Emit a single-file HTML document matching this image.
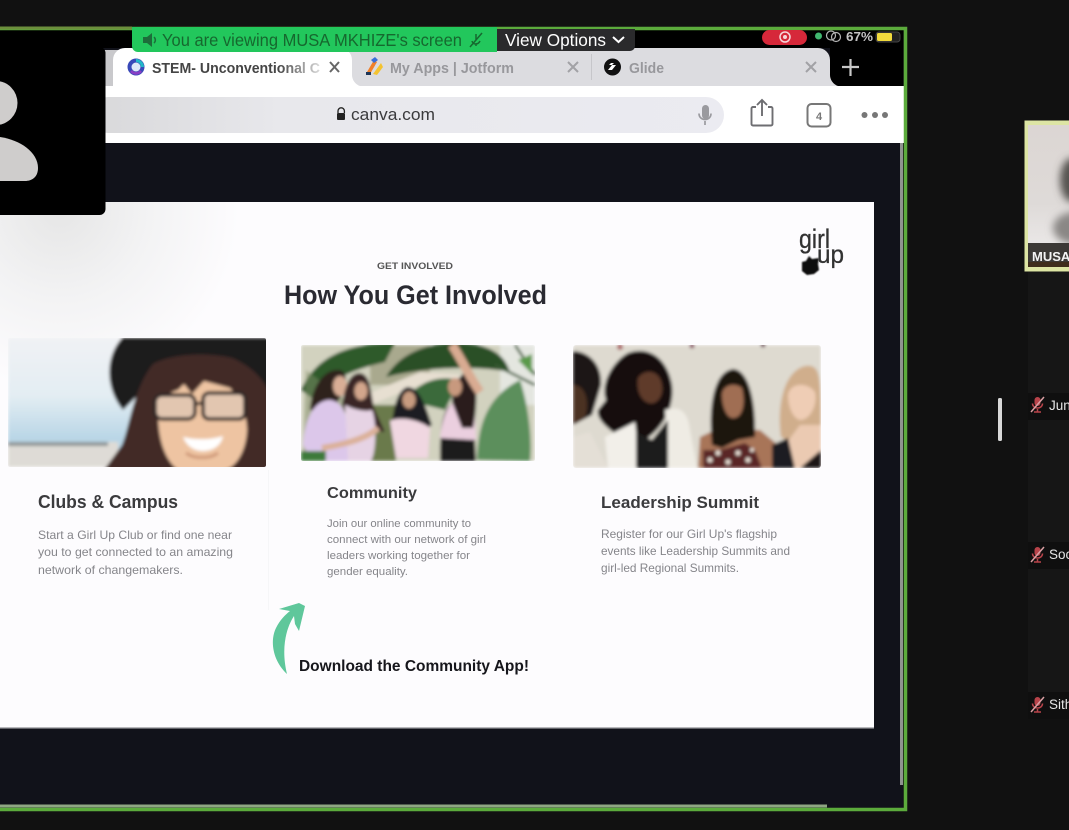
<!DOCTYPE html>
<html lang="en">
<head>
<meta charset="utf-8">
<title>Zoom screen share</title>
<style>
html,body{margin:0;padding:0;background:#111;width:1069px;height:830px;overflow:hidden}
svg{display:block}
text{font-family:"Liberation Sans",sans-serif}
</style>
</head>
<body>
<svg xmlns="http://www.w3.org/2000/svg" width="1069" height="830" viewBox="0 0 1069 830">
<defs>
<filter id="b1" x="-5%" y="-5%" width="110%" height="110%"><feGaussianBlur stdDeviation="1.500"/></filter>
<filter id="b3" x="-50%" y="-50%" width="200%" height="200%"><feGaussianBlur stdDeviation="4"/></filter>
<filter id="bt" x="-2%" y="-20%" width="104%" height="140%"><feGaussianBlur stdDeviation="0.35"/></filter>
<filter id="bt2" x="-20%" y="-20%" width="140%" height="140%"><feGaussianBlur stdDeviation="0.8"/></filter>
<linearGradient id="sky" x1="0" y1="0" x2="0" y2="1"><stop offset="0" stop-color="#f0f2f4"/><stop offset=".45" stop-color="#e3edf3"/><stop offset=".78" stop-color="#b9d6e6"/><stop offset="1" stop-color="#c0d8e6"/></linearGradient>
<linearGradient id="addr" x1="0" y1="0" x2="1" y2="0"><stop offset="0" stop-color="#d8d8da"/><stop offset=".3" stop-color="#e8e8ec"/><stop offset="1" stop-color="#ebebf1"/></linearGradient>
<linearGradient id="fade" x1="0" y1="0" x2="1" y2="0"><stop offset="0" stop-color="#444"/><stop offset=".75" stop-color="#444"/><stop offset="1" stop-color="#ddd"/></linearGradient>
<radialGradient id="mist" gradientUnits="userSpaceOnUse" cx="60" cy="210" r="180"><stop offset="0" stop-color="#e6e6e6"/><stop offset=".5" stop-color="#f3f3f4"/><stop offset="1" stop-color="#fdfcfe"/></radialGradient>
<linearGradient id="musa" x1="0" y1="0" x2="0" y2="1"><stop offset="0" stop-color="#dcd6d3"/><stop offset=".55" stop-color="#dedad8"/><stop offset="1" stop-color="#f0eeee"/></linearGradient>
<clipPath id="p1"><rect x="8" y="338" width="258" height="129" rx="2"/></clipPath>
<clipPath id="p2"><rect x="301" y="345" width="234" height="116" rx="2"/></clipPath>
<clipPath id="p3"><rect x="573" y="345" width="248" height="123" rx="3"/></clipPath>
<g id="mutemic" fill="none">
  <rect x="3.500" y="0" width="6" height="9" rx="3" fill="#b8434a"/>
  <path d="M1.500 6.500c0 6 10 6 10 0M6.500 12v2.500M3 15h7" stroke="#b8434a" stroke-width="1.500"/>
  <path d="M0 15L13 0" stroke="#d9a0a4" stroke-width="1.500"/>
</g>
</defs>

<rect width="1069" height="830" fill="#111"/>

<!-- main share frame -->
<rect x="0" y="30" width="903" height="778" fill="#11121a"/>
<rect x="0" y="30" width="903" height="18" fill="#000"/>
<rect x="830" y="30" width="73" height="56" fill="#000"/>

<!-- tabs -->
<rect x="100" y="50" width="30" height="36" fill="#c9c9cc"/>
<path d="M335 86V48H818a12 12 0 0 1 12 12v14a12 12 0 0 0 8 12z" fill="#dcdce0"/>
<path d="M113 86V60a12 12 0 0 1 12-12H340a12 12 0 0 1 12 12v14a12 12 0 0 0 8 12z" fill="#fff"/>
<rect x="0" y="86" width="904" height="57" fill="#fff"/>
<rect x="591" y="54" width="1" height="26" fill="#c6c6ca"/>

<circle cx="136" cy="67" r="8.500" fill="#3848b8"/>
<path d="M136 59a8 8 0 0 1 8 8h-3a5 5 0 0 0-5-5z" fill="#22b8c8"/>
<path d="M130 72a8 8 0 0 0 12 0l-2-2a5 5 0 0 1-8 0z" fill="#8a3fc4"/>
<circle cx="136" cy="67" r="4.500" fill="#dfe8f8"/>
<text x="152" y="73" font-size="14.500" font-weight="700" fill="url(#fade)" textLength="168" lengthAdjust="spacingAndGlyphs" filter="url(#bt)">STEM- Unconventional C</text>
<path d="M330 62l9 10M339 62l-9 10" stroke="#666" stroke-width="2"/>

<path d="M367 72l7-12 3 2-7 12z" fill="#f0802a"/>
<path d="M373 74l8-11 2 4-6 8z" fill="#f4c330"/>
<path d="M371 60l4-3 3 3-4 3z" fill="#3a6fd8"/>
<rect x="366" y="72" width="5" height="3" fill="#1d3557"/>
<text x="390" y="73" font-size="14.500" font-weight="700" fill="#98989c" textLength="124" lengthAdjust="spacingAndGlyphs" filter="url(#bt)">My Apps | Jotform</text>
<path d="M568 62l10 10M578 62l-10 10" stroke="#a2a2a6" stroke-width="2"/>

<circle cx="612.500" cy="67" r="8.500" fill="#111"/>
<path d="M608 70l4-5h4l-4 5zM609 65l2-2h3l-2 2z" fill="#fff"/>
<text x="629" y="73" font-size="14.500" font-weight="700" fill="#98989c" textLength="35" lengthAdjust="spacingAndGlyphs" filter="url(#bt)">Glide</text>
<path d="M806 62l10 10M816 62l-10 10" stroke="#a2a2a6" stroke-width="2"/>
<path d="M842 67h17M850.500 59v17" stroke="#c8c8c8" stroke-width="2.200"/>

<!-- address bar -->
<rect x="90" y="97" width="634" height="36" rx="18" fill="url(#addr)"/>
<path d="M338 113v-2a3.200 3.200 0 0 1 6.400 0v2" fill="none" stroke="#222" stroke-width="1.300"/>
<rect x="337" y="113" width="8" height="7" rx="1" fill="#222"/>
<text x="351" y="120" font-size="17" fill="#3a3a3c" textLength="84" lengthAdjust="spacingAndGlyphs" filter="url(#bt)">canva.com</text>
<rect x="702" y="105" width="7" height="14" rx="3.500" fill="#9a9a9f"/>
<path d="M699 113.500c0 8 12 8 12 0M705 121v4" stroke="#9a9a9f" stroke-width="1.700" fill="none"/>
<path d="M756 107h-3a1.500 1.500 0 0 0-1.500 1.500V124a1.500 1.500 0 0 0 1.500 1.500h18a1.500 1.500 0 0 0 1.500-1.500V108.500a1.500 1.500 0 0 0-1.500-1.500h-3M762 116V101M757 105l5-5 5 5" fill="none" stroke="#6e6e72" stroke-width="1.900"/>
<rect x="807.500" y="104" width="23" height="22.500" rx="4" fill="none" stroke="#777" stroke-width="2"/>
<text x="819" y="120" font-size="11" font-weight="700" text-anchor="middle" fill="#777">4</text>
<circle cx="864.500" cy="115" r="3" fill="#777"/><circle cx="875" cy="115" r="3" fill="#777"/><circle cx="885" cy="115" r="3" fill="#777"/>

<!-- slide -->
<rect x="0" y="202" width="874" height="526" fill="#fdfcfe"/>
<rect x="0" y="202" width="260" height="200" fill="url(#mist)"/>
<rect x="0" y="727" width="874" height="1.500" fill="#b8b8bc"/>
<rect x="268" y="470" width="1" height="140" fill="#f6f6f8"/>

<text x="377" y="269" font-size="9" font-weight="700" fill="#555" textLength="76" lengthAdjust="spacingAndGlyphs" filter="url(#bt)">GET INVOLVED</text>
<text x="284" y="304" font-size="27" font-weight="700" fill="#2b2b30" textLength="263" lengthAdjust="spacingAndGlyphs" filter="url(#bt)">How You Get Involved</text>

<!-- logo -->
<path d="M802 262l4-1 3-5 3 3 7-1-1 6 1 6-5 4-7 1-5-4z" fill="#111" filter="url(#bt2)"/>
<g filter="url(#bt)" stroke="#333" stroke-width=".3">
<text x="799" y="248" font-size="27" fill="#333" textLength="31" lengthAdjust="spacingAndGlyphs">girl</text>
<text x="817" y="263" font-size="25" fill="#333" textLength="27" lengthAdjust="spacingAndGlyphs">up</text>
</g>

<!-- photo 1 -->
<g clip-path="url(#p1)">
<g filter="url(#b1)">
<rect x="8" y="338" width="258" height="129" fill="url(#sky)"/>
<rect x="8" y="442" width="110" height="25" fill="#dedbd6"/>
<rect x="8" y="442" width="100" height="4" fill="#8f9596"/>
<path d="M122 338H270V420L240 372 165 368 123 410C106 390 104 358 122 338z" fill="#1d1a1e"/>
<path d="M153 364C133 390 130 425 122 445L104 470H270V395C264 378 250 366 232 358 205 352 172 354 153 364z" fill="#422a28"/>
<path d="M158 412C160 398 170 392 178 390L184 384 192 394 204 381 230 388C240 398 247 415 247 430 246 452 235 470 222 470H178C165 460 158 440 158 412z" fill="#eec4a2"/>
<rect x="155" y="395" width="40" height="24" rx="7" fill="#e2c6b0" stroke="#2f2725" stroke-width="3.500"/>
<rect x="203" y="393" width="42" height="26" rx="6" fill="#e2c6b0" stroke="#2f2725" stroke-width="3.500"/>
<path d="M195 404l8-1" stroke="#2f2725" stroke-width="3"/>
<path d="M183 437c12 3 28 3 40-1-2 11-12 15-20 15s-16-4-20-14z" fill="#fff"/>
<path d="M186 453c8 6 24 6 32 0" fill="none" stroke="#cf9878" stroke-width="3"/>
</g>
</g>

<!-- photo 2 -->
<g clip-path="url(#p2)">
<g filter="url(#b1)">
<rect x="301" y="345" width="234" height="116" fill="#d2d2bf"/>
<rect x="370" y="345" width="60" height="40" fill="#a9a98e"/>
<rect x="500" y="345" width="35" height="60" fill="#e4e6e0"/>
<path d="M301 390C315 358 345 343 395 343L385 362C360 368 330 378 312 398z" fill="#2f5a2a"/>
<path d="M386 377C400 352 430 343 455 343 490 343 505 355 510 372 480 366 430 366 386 377z" fill="#2a4f27"/>
<path d="M365 395L420 372 470 375 480 390 420 385 370 405z" fill="#e7dfd1"/>
<path d="M405 400C420 380 440 375 460 380L445 410z" fill="#3a6a3a"/>
<rect x="366" y="405" width="30" height="56" fill="#6b7a4c"/>
<path d="M306 370L303 461 345 461 345 400z" fill="#7f8c66" opacity=".5"/>
<path d="M310 410C312 385 325 368 340 370 350 373 346 392 337 402L332 412z" fill="#2f211f"/>
<path d="M303 445C305 415 316 400 330 400 345 402 350 420 350 461H312z" fill="#dcc7ea"/>
<ellipse cx="340" cy="386" rx="7" ry="10" fill="#d9ae96"/>
<path d="M342 405C345 385 350 373 360 373 372 375 370 395 375 410L385 432 365 430 345 412z" fill="#3a2826"/>
<ellipse cx="361" cy="391" rx="6.500" ry="9" fill="#d3a68c"/>
<path d="M345 405C355 410 365 412 372 410 378 425 375 461 370 461H348z" fill="#e6d3e4"/>
<path d="M322 448C340 445 365 440 378 428" fill="none" stroke="#dbb19a" stroke-width="6"/>
<path d="M392 430C392 410 398 388 408 387 420 388 425 405 432 425L420 432z" fill="#1f1a20"/>
<ellipse cx="409" cy="400" rx="6.500" ry="8.500" fill="#c79b80"/>
<path d="M390 421C400 416 420 420 430 428L428 458H396z" fill="#f0d7e1"/>
<path d="M440 461C440 430 442 412 450 405L473 408 476 461z" fill="#1a1a1e"/>
<path d="M440 438C443 415 448 405 455 402L475 408 476 440z" fill="#ebcfdf"/>
<path d="M452 402C452 385 462 369 472 372 478 385 477 410 473 428H462z" fill="#2a1e1e"/>
<ellipse cx="455" cy="387" rx="7" ry="9" fill="#c8997e"/>
<path d="M452 345C462 360 470 378 480 392" fill="none" stroke="#d9ab92" stroke-width="9"/>
<path d="M477 460C478 420 490 395 520 380 530 410 532 445 530 461z" fill="#5b8f5c"/>
<path d="M515 345L535 375M495 365L535 385" stroke="#3a5a34" stroke-width="2.500"/>
<path d="M518 360l14 14v-20z" fill="#5a9a4a"/>
<rect x="301" y="451" width="25" height="10" fill="#3e7a3a"/>
</g>
</g>

<!-- photo 3 -->
<g clip-path="url(#p3)">
<g filter="url(#b1)">
<rect x="573" y="345" width="248" height="123" fill="#dedad0"/>
<circle cx="620" cy="347" r="3" fill="#a66"/><circle cx="692" cy="346" r="2.500" fill="#85485e"/><circle cx="763" cy="345" r="2.500" fill="#6e4858"/>
<path d="M573 351C590 352 602 365 601 385L592 415 573 425z" fill="#1e1714"/>
<path d="M573 385C585 385 590 400 585 418L573 425z" fill="#4c3022"/>
<path d="M573 437L590 432 608 468H573z" fill="#e4dfd6"/>
<path d="M606 400C600 385 612 362 628 353 650 345 668 360 672 385 675 410 660 430 645 440L620 437C610 430 596 420 598 410z" fill="#17100e"/>
<path d="M638 378C645 368 660 370 662 385 664 398 655 405 649 403 641 401 636 390 638 378z" fill="#5f3a2b"/>
<path d="M605 437L635 422 640 468H608z" fill="#f2efe9"/>
<path d="M665 410C680 405 688 412 690 430L697 468H668z" fill="#efece4"/>
<path d="M636 432L652 440 668 420 668 468H636z" fill="#1e1a1a"/>
<path d="M700 437L715 430 760 430 778 445 780 468H698z" fill="#a87458"/>
<path d="M712 445C708 405 714 372 733 369 750 370 756 405 755 437L738 440 722 448z" fill="#1e1210"/>
<path d="M722 395C722 385 735 382 742 388 746 405 742 418 733 418 726 418 722 405 722 395z" fill="#a06e52"/>
<path d="M703 450L720 450 745 443 755 450 762 468H703z" fill="#5a2526"/>
<g fill="#efe6dc"><circle cx="710" cy="460" r="2.500"/><circle cx="718" cy="453" r="2.500"/><circle cx="728" cy="462" r="2.500"/><circle cx="738" cy="453" r="2.500"/><circle cx="748" cy="460" r="2.500"/><circle cx="752" cy="450" r="2"/></g>
<path d="M781 437C777 410 782 372 805 366 821 364 821 375 821 437L790 442z" fill="#d0ae8c"/>
<path d="M788 395C790 382 808 382 815 392 818 405 810 420 800 420 792 418 788 405 788 395z" fill="#efcdb5"/>
<path d="M785 445L800 425 821 425V468H790z" fill="#ebcab2"/>
<path d="M772 445L788 438 795 468H772z" fill="#1f1a20"/>
<path d="M800 468L821 450V468z" fill="#1a1518"/>
</g>
</g>

<!-- card text -->
<g filter="url(#bt)">
<text x="38" y="508" font-size="18" font-weight="700" fill="#3a3a3e" textLength="140" lengthAdjust="spacingAndGlyphs">Clubs &amp; Campus</text>
<g font-size="12" fill="#85858a">
<text x="38" y="539" textLength="194" lengthAdjust="spacingAndGlyphs">Start a Girl Up Club or find one near</text>
<text x="38" y="556" textLength="195" lengthAdjust="spacingAndGlyphs">you to get connected to an amazing</text>
<text x="38" y="574" textLength="145" lengthAdjust="spacingAndGlyphs">network of changemakers.</text>
</g>
<text x="327" y="498" font-size="16" font-weight="700" fill="#3a3a3e" textLength="90" lengthAdjust="spacingAndGlyphs">Community</text>
<g font-size="11" fill="#85858a">
<text x="327" y="527" textLength="144" lengthAdjust="spacingAndGlyphs">Join our online community to</text>
<text x="327" y="543" textLength="159" lengthAdjust="spacingAndGlyphs">connect with our network of girl</text>
<text x="327" y="559" textLength="143" lengthAdjust="spacingAndGlyphs">leaders working together for</text>
<text x="327" y="575" textLength="81" lengthAdjust="spacingAndGlyphs">gender equality.</text>
</g>
<text x="601" y="508" font-size="17" font-weight="700" fill="#3a3a3e" textLength="158" lengthAdjust="spacingAndGlyphs">Leadership Summit</text>
<g font-size="12" fill="#85858a">
<text x="601" y="538" textLength="176" lengthAdjust="spacingAndGlyphs">Register for our Girl Up's flagship</text>
<text x="601" y="555" textLength="189" lengthAdjust="spacingAndGlyphs">events like Leadership Summits and</text>
<text x="601" y="572" textLength="138" lengthAdjust="spacingAndGlyphs">girl-led Regional Summits.</text>
</g>
<text x="299" y="671" font-size="15.500" font-weight="700" fill="#17171a" textLength="230" lengthAdjust="spacingAndGlyphs">Download the Community App!</text>
</g>

<!-- arrow -->
<path d="M287 674C272 660 270 640 276 628 280 620 285 615 290 611L279 609 299 603 305 606 299 631 295 624 294 616C288 625 280 645 287 674z" fill="#5ec79b" filter="url(#bt)"/>

<!-- avatar box -->
<rect x="-10" y="47" width="115.500" height="168" rx="6" fill="#000"/>
<ellipse cx="-4" cy="103" rx="21.500" ry="22" fill="#cfcdcc"/>
<path d="M0 137C20 140 38 152 38 168 38 177 32 181 25 181H0z" fill="#cfcdcc"/>

<!-- right edge scrollbar and frame -->
<rect x="900" y="143" width="3" height="642" fill="#8f9390"/>
<rect x="0" y="804.500" width="827" height="3" fill="#8fa683"/>
<path d="M0 28.500H905.500V809.500H0" fill="none" stroke="#5cab3c" stroke-width="3.500"/>
<rect x="0" y="26.500" width="132" height="3" fill="#6c8f3c"/>

<!-- top status -->
<rect x="762" y="30" width="45" height="15" rx="7.500" fill="#d6283a"/>
<circle cx="785" cy="37" r="5" fill="none" stroke="#f6d6da" stroke-width="1.500"/>
<circle cx="785" cy="37" r="2" fill="#f6d6da"/>
<circle cx="818.500" cy="36" r="3.500" fill="#41b870"/>
<circle cx="831" cy="35.500" r="4.500" fill="none" stroke="#b5b5b5" stroke-width="1.200"/>
<circle cx="836" cy="37" r="4.500" fill="none" stroke="#b5b5b5" stroke-width="1.200"/>
<text x="846" y="41" font-size="13" font-weight="700" fill="#c4c4c4" textLength="27" lengthAdjust="spacingAndGlyphs">67%</text>
<rect x="876" y="32" width="24" height="10" rx="3" fill="#222" stroke="#444" stroke-width="1"/>
<rect x="877" y="33" width="15" height="8" rx="1.500" fill="#f1da3c"/>

<!-- zoom banner -->
<path d="M132 27H497V52H138a6 6 0 0 1-6-6z" fill="#22c75c"/>
<path d="M143 37h4l5-4v14l-5-4h-4z" fill="#1d6d3a"/>
<path d="M154 37a4 4 0 0 1 0 6" stroke="#1d6d3a" stroke-width="1.500" fill="none"/>
<text x="162" y="46" font-size="17.500" fill="#16682f" textLength="300" lengthAdjust="spacingAndGlyphs" filter="url(#bt)">You are viewing MUSA MKHIZE's screen</text>
<g stroke="#16682f" stroke-width="1.500" fill="none"><path d="M476 34v6M472 41c1 4 6 4 8 0M476 44v2M470 47l12-14"/></g>
<path d="M497 29H635V46a5 5 0 0 1-5 5H497z" fill="#2a2a2c"/>
<text x="505" y="46" font-size="17.500" fill="#fff" textLength="101" lengthAdjust="spacingAndGlyphs" filter="url(#bt)">View Options</text>
<path d="M613 37l5.500 5 5.500-5" fill="none" stroke="#fff" stroke-width="2"/>

<!-- scroll handle -->
<rect x="998" y="398" width="4" height="43" rx="1.500" fill="#d8d8d8"/>

<!-- participants -->
<rect x="1028" y="272" width="41" height="440" fill="#161616"/>
<rect x="1024.500" y="120.500" width="50" height="151" fill="#dde5a4"/>
<rect x="1028" y="125" width="45" height="142" fill="url(#musa)"/>
<g filter="url(#b3)"><ellipse cx="1072" cy="180" rx="12" ry="22" fill="#55524f"/><ellipse cx="1075" cy="228" rx="22" ry="16" fill="#8a8785"/></g>
<rect x="1028" y="243" width="45" height="24" fill="#3c3936"/>
<rect x="1028" y="262" width="45" height="5" fill="#3f2d1c"/>
<text x="1032" y="261" font-size="13" font-weight="700" fill="#f4f4f4" filter="url(#bt)">MUSA</text>

<rect x="1028" y="393" width="41" height="27" fill="#0f0f0f"/>
<use href="#mutemic" x="1031" y="397"/>
<text x="1049" y="410" font-size="13.500" fill="#e6e6e6" filter="url(#bt)">Jun</text>
<rect x="1028" y="542" width="41" height="27" fill="#0f0f0f"/>
<use href="#mutemic" x="1031" y="547"/>
<text x="1049" y="559" font-size="13.500" fill="#e6e6e6" filter="url(#bt)">Soc</text>
<rect x="1028" y="692" width="41" height="27" fill="#0f0f0f"/>
<use href="#mutemic" x="1031" y="697"/>
<text x="1049" y="709" font-size="13.500" fill="#e6e6e6" filter="url(#bt)">Sith</text>
</svg>
</body>
</html>
